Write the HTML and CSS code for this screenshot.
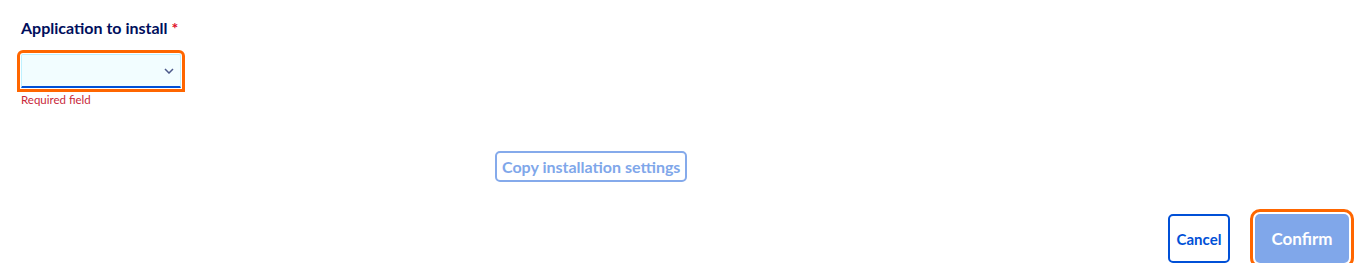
FILE: index.html
```html
<!DOCTYPE html>
<html>
<head>
<meta charset="utf-8">
<link rel="stylesheet" href="styles.css">
</head>
<body>
<div class="page">
  <div class="field">
    <label class="label">Application to install <span class="req">*</span></label>
    <div class="select-wrap">
      <div class="select">
        <svg class="chev" width="10" height="6" viewBox="0 0 10 6"><path d="M1 1 L5 5 L9 1" fill="none" stroke="#4d5a8a" stroke-width="1.5"/></svg>
      </div>
    </div>
    <div class="error">Required field</div>
  </div>
  <div class="copy-row">
    <button class="btn-copy">Copy installation settings</button>
  </div>
  <div class="actions">
    <button class="btn-cancel">Cancel</button>
    <button class="btn-confirm">Confirm</button>
  </div>
</div>
</body>
</html>
```
FILE: styles.css
```css
* { box-sizing: border-box; }
body { margin: 0; font-family: "Lato", "Open Sans", sans-serif; background: #fff; }
.page { padding: 18px 20px 0 21px; }
.field { display: flex; flex-direction: column; align-items: flex-start; }
.label { font-size: 16px; font-weight: 700; color: #000e5c; line-height: 20px; }
.req { color: #e00d27; }
.select-wrap { margin-top: 16px; }
.select {
  width: 160px; height: 34px;
  background: #f2fdff;
  border: 1px solid #bef1ff;
  border-bottom: 2px solid #0050d7;
  border-radius: 2px 2px 0 0;
  outline: 3px solid #ff6600; outline-offset: 1px;
  display: flex; align-items: center; justify-content: flex-end; padding-right: 6px;
}
.error { margin-top: 5px; font-size: 11.5px; color: #c8283a; line-height: 14px; }
.copy-row { margin-top: 44px; padding-left: 474px; }
.btn-copy {
  font-family: inherit; font-size: 16px; font-weight: 700; color: #7fa7ea;
  background: #fff; border: 2px solid #85aaeb; border-radius: 5px;
  height: 31px; padding: 0 5px;
}
.actions { margin-top: 32px; display: flex; justify-content: flex-end; gap: 25px; align-items: center; }
.btn-cancel {
  font-family: inherit; font-size: 15px; font-weight: 700; color: #0050d7;
  background: #fff; border: 2px solid #0050d7; border-radius: 5px;
  width: 62px; height: 49px; padding: 0;
}
.btn-confirm {
  font-family: inherit; font-size: 17px; font-weight: 700; color: #fff;
  background: #80a7ea; border: none; border-radius: 5px;
  width: 94px; height: 49px; padding: 0;
  outline: 3px solid #ff6600; outline-offset: 2px;
}
```
